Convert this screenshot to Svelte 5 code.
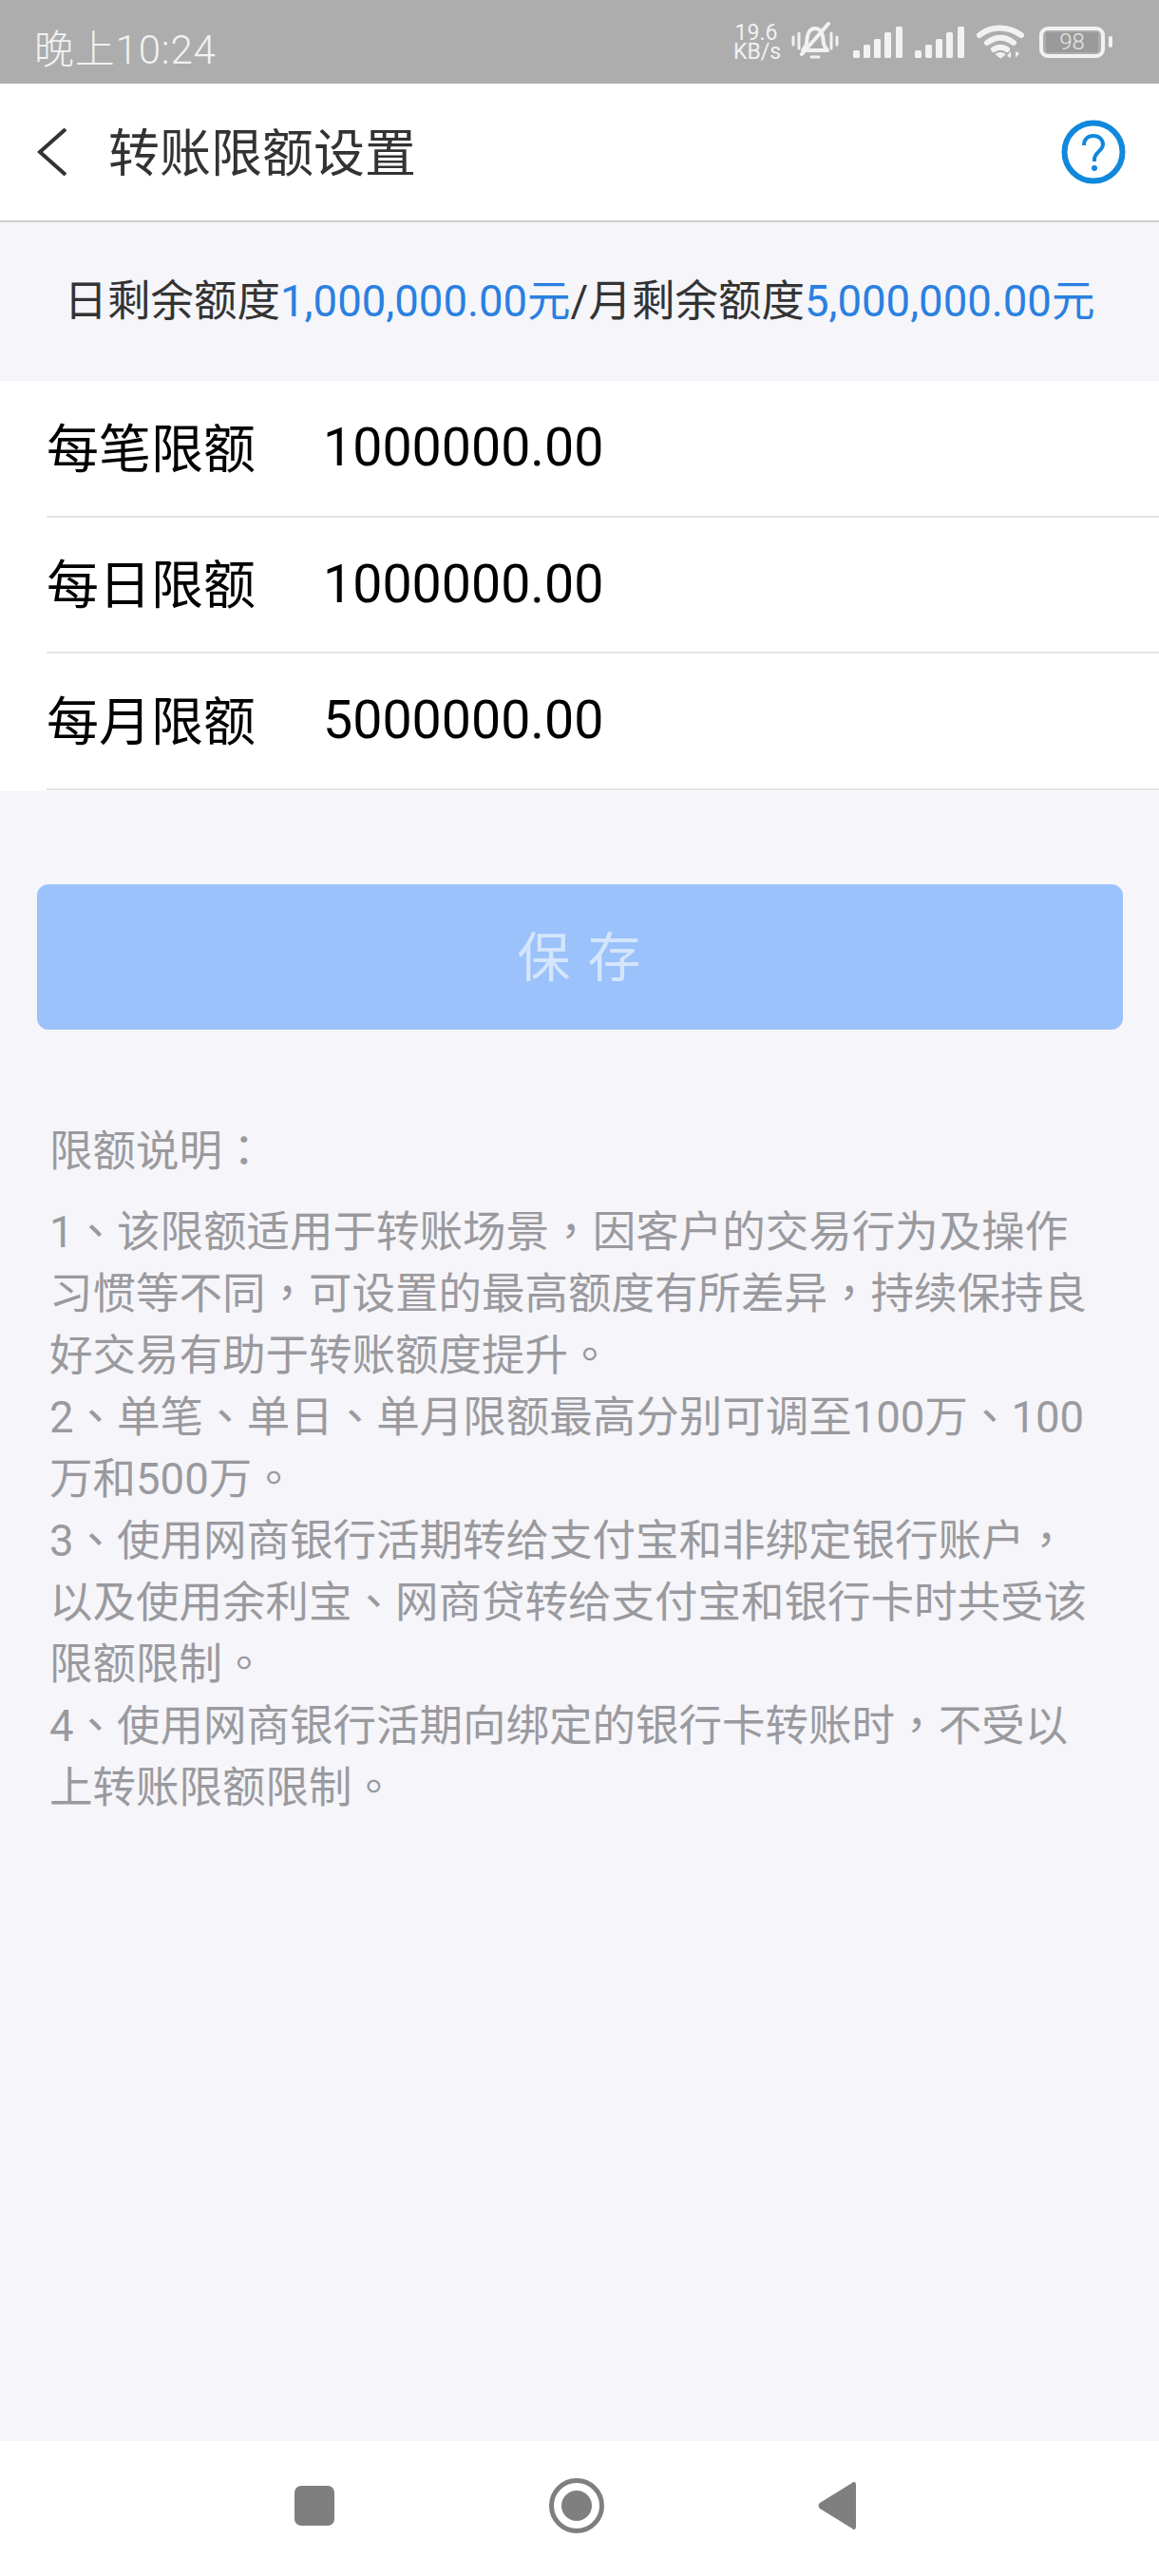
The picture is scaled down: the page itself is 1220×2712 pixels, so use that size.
<script>
  let rows = [
    { label: "每笔限额", value: "1000000.00" },
    { label: "每日限额", value: "1000000.00" },
    { label: "每月限额", value: "5000000.00" },
  ];

  // broken by hand, the phone wraps these lines the same way
  let lines = [
    "1、该限额适用于转账场景，因客户的交易行为及操作",
    "习惯等不同，可设置的最高额度有所差异，持续保持良",
    "好交易有助于转账额度提升。",
    "2、单笔、单日、单月限额最高分别可调至100万、100",
    "万和500万。",
    "3、使用网商银行活期转给支付宝和非绑定银行账户，",
    "以及使用余利宝、网商贷转给支付宝和银行卡时共受该",
    "限额限制。",
    "4、使用网商银行活期向绑定的银行卡转账时，不受以",
    "上转账限额限制。",
  ];

  // the phone font centres its punctuation in the box, the TC font does too
  function pieces(text) {
    return text.split(/([、，。：])/);
  }
</script>

<div class="page">
  <header class="status">
    <span class="time">晚上10:24</span>
    <div class="status-right">
      <span class="speed">{"19.6\nKB/s"}</span>
      <svg class="bell" width="50" height="42" viewBox="0 0 50 42" fill="none" stroke="#f2f2f2">
        <path d="M14 27c3-3 2-8 3-12 1-5 4-8 8-8s7 3 8 8c1 4 0 9 3 12l2 3H12z" stroke-width="4" stroke-linejoin="round" />
        <path d="M21 37h8" stroke-width="3" stroke-linecap="round" />
        <path d="M39 2 11 34" stroke-width="4" stroke-linecap="round" />
        <path d="M2 16v8M8 12v16M42 12v16M48 16v8" stroke-width="3" stroke-linecap="round" />
      </svg>
      <div class="signals">
        {#each [0, 1] as s}
          <svg width="52" height="33" viewBox="0 0 52 33" fill="#f2f2f2">
            <rect x="0" y="25" width="7" height="8" rx="1.5" />
            <rect x="11" y="19" width="7" height="14" rx="1.5" />
            <rect x="22" y="13" width="7" height="20" rx="1.5" />
            <rect x="33" y="6" width="7" height="27" rx="1.5" />
            <rect x="45" y="0" width="7" height="33" rx="1.5" />
          </svg>
        {/each}
      </div>
      <svg class="wifi" width="50" height="36" viewBox="0 0 50 36" fill="none" stroke="#f2f2f2" stroke-width="6" stroke-linecap="round">
        <path d="M3 11C15 1 33 1 47 11" />
        <path d="M11 19c9-7 19-7 28 0" />
        <path d="M18 26c4-3 10-3 14 0" />
        <path d="M25 35l-5-4c3-2 7-2 10 0z" stroke-width="1" fill="#f2f2f2" />
        <path d="M36 35v-7l-4 5zM41 28v7l4-5z" stroke="none" fill="#f2f2f2" />
      </svg>
      <div class="battery-wrap">
        <div class="battery">
          <div class="cell">98</div>
        </div>
        <div class="nub"></div>
      </div>
    </div>
  </header>

  <nav class="topbar">
    <svg class="back" width="32" height="52" viewBox="0 0 32 52" fill="none" stroke="#333" stroke-width="4">
      <path d="M30 2 3 26l27 24" />
    </svg>
    <h1>转账限额设置</h1>
    <svg class="help" width="68" height="68" viewBox="0 0 68 68" fill="none">
      <circle cx="34" cy="34" r="30.5" stroke="#1088dc" stroke-width="6" />
      <path d="M24 27c0-6 4-10 10-10s10 4 10 9c0 7-9 8-9 16v2" stroke="#1088dc" stroke-width="4" />
      <circle cx="35" cy="51" r="3" fill="#1088dc" />
    </svg>
  </nav>

  <p class="summary">
    <span>日剩余额度<em>1,000,000.00元</em>/月剩余额度<em>5,000,000.00元</em></span>
  </p>

  <section class="limits">
    {#each rows as row}
      <div class="row">
        <span class="label">{row.label}</span>
        <span class="value">{row.value}</span>
      </div>
    {/each}
  </section>

  <button class="save">保 存</button>

  <div class="notes">
    <p class="notes-title">限额说明<span class="punct">：</span></p>
    {#each lines as line}
      <p>
        {#each pieces(line) as part, i}
          {#if i % 2}<span class="punct">{part}</span>{:else}{part}{/if}
        {/each}
      </p>
    {/each}
  </div>

  <footer class="navbar">
    <div class="square"></div>
    <div class="ring"><div class="dot"></div></div>
    <svg width="40" height="50" viewBox="0 0 40 50" fill="#7f7f7f">
      <path d="M36 1c2-2 4-1 4 2v44c0 3-2 4-4 2L2 28c-2-2-2-4 0-6z" />
    </svg>
  </footer>
</div>

<style>
  :global(body) {
    margin: 0;
    background: #f5f5fa;
  }
  .page {
    width: 1220px;
    height: 2712px;
    display: flex;
    flex-direction: column;
    background: #f5f5fa;
    font-family: Roboto, "Noto Sans CJK SC", sans-serif;
    overflow: hidden;
  }
  .status {
    height: 88px;
    flex: none;
    box-sizing: border-box;
    background: #adadad;
    display: flex;
    align-items: center;
    justify-content: space-between;
    padding: 8px 49px 0 36px;
    color: #f2f2f2;
  }
  .time {
    font-size: 42px;
    font-weight: 300;
    letter-spacing: 0.8px;
  }
  .status-right {
    display: flex;
    align-items: center;
    gap: 13px;
    margin-top: -8px;
  }
  .speed {
    width: 48px;
    font-size: 23px;
    line-height: 20px;
    text-align: center;
    white-space: pre;
    margin-top: 2px;
  }
  .signals {
    display: flex;
    gap: 13px;
    margin-left: 2px;
  }
  .battery-wrap {
    display: flex;
    align-items: center;
    gap: 4px;
    margin-left: 3px;
  }
  .battery {
    box-sizing: border-box;
    width: 69px;
    height: 33px;
    border: 4px solid #f2f2f2;
    border-radius: 9px;
    padding: 2px 3px;
    display: flex;
  }
  .cell {
    flex: 1;
    background: #9a9a9a;
    color: #e4e4e4;
    font-size: 24px;
    font-weight: 300;
    line-height: 21px;
    text-align: center;
  }
  .nub {
    width: 4px;
    height: 12px;
    border-radius: 2px;
    background: #f2f2f2;
  }
  .topbar {
    height: 146px;
    flex: none;
    box-sizing: border-box;
    background: #fff;
    border-bottom: 2px solid #cfcfcf;
    display: flex;
    align-items: center;
    padding: 0 35px 0 39px;
  }
  h1 {
    margin: 0 0 6px 43px;
    font-size: 54px;
    font-weight: 400;
    color: #333;
    flex: 1;
  }
  .summary {
    margin: 0;
    height: 167px;
    flex: none;
    box-sizing: border-box;
    padding-bottom: 10px;
    display: flex;
    align-items: center;
    justify-content: center;
    font-size: 45.5px;
    color: #333;
    white-space: pre;
  }
  em {
    font-style: normal;
    color: #2a80e0;
  }
  .limits {
    background: #fff;
    flex: none;
    padding-bottom: 1px;
  }
  .row {
    height: 143.5px;
    box-sizing: border-box;
    margin-left: 49px;
    border-bottom: 2px solid #e4e4e4;
    display: flex;
    align-items: center;
    color: #000;
  }
  .label {
    width: 294px;
    font-size: 55px;
    margin-bottom: 8px;
  }
  .value {
    font-size: 55.5px;
    margin-left: -3px;
  }
  .save {
    flex: none;
    margin: 98.5px 38px 0 39px;
    height: 153px;
    border: 0;
    border-radius: 12px;
    padding: 0 0 8px;
    background: #9bc2fb;
    color: #d5e5fb;
    font: inherit;
    font-size: 56px;
    letter-spacing: 2px;
  }
  .notes {
    padding: 0 40px 0 52px;
    font-size: 45.5px;
    line-height: 65px;
    color: #9a9a9e;
  }
  .notes p {
    margin: 0;
    white-space: nowrap;
  }
  .notes .notes-title {
    margin: 96px 0 20px;
  }
  .punct {
    font-family: "Noto Sans CJK TC", sans-serif;
    line-height: 0;
  }
  .navbar {
    margin-top: auto;
    height: 142px;
    flex: none;
    box-sizing: border-box;
    background: #fff;
    display: flex;
    align-items: center;
    padding: 0 0 6px 310px;
  }
  .square {
    width: 42px;
    height: 42px;
    border-radius: 7px;
    background: #7f7f7f;
  }
  .ring {
    margin-left: 226px;
    box-sizing: border-box;
    width: 58px;
    height: 58px;
    border: 5px solid #7f7f7f;
    border-radius: 50%;
    display: flex;
    align-items: center;
    justify-content: center;
  }
  .dot {
    width: 32px;
    height: 32px;
    border-radius: 50%;
    background: #7f7f7f;
  }
  .navbar svg {
    margin-left: 225px;
  }
</style>
